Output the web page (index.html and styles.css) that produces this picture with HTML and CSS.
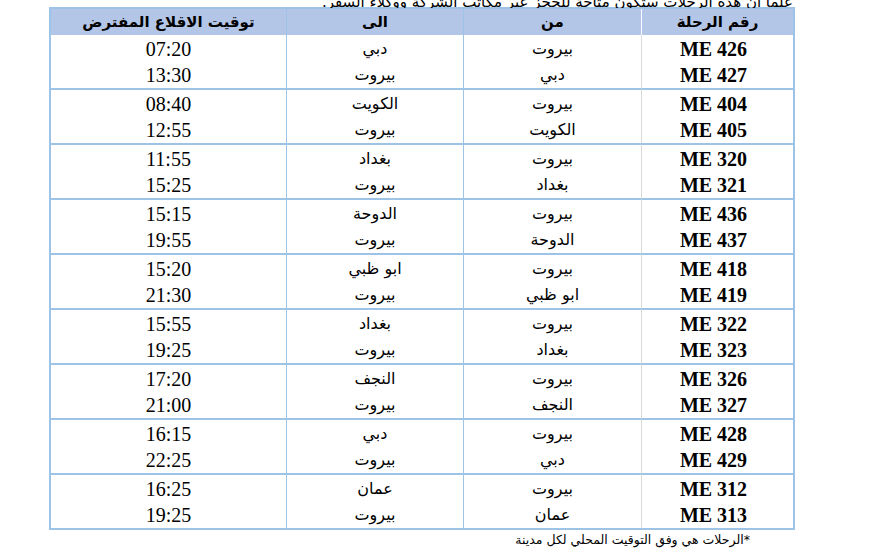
FILE: index.html
```html
<!DOCTYPE html>
<html lang="ar" dir="rtl">
<head>
<meta charset="utf-8">
<title>جدول الرحلات</title>
<link rel="stylesheet" href="styles.css">
</head>
<body>
<div class="page">
  <div class="clip"><p class="lead">علماً أن هذه الرحلات ستكون متاحة للحجز عبر مكاتب الشركة ووكلاء السفر.</p></div>
  <table class="flights">
    <colgroup>
      <col class="c-num"><col class="c-from"><col class="c-to"><col class="c-time">
    </colgroup>
    <thead>
      <tr>
        <th class="num">رقم الرحلة</th>
        <th>من</th>
        <th>الى</th>
        <th class="last">توقيت الاقلاع المفترض</th>
      </tr>
    </thead>
    <tbody>
      <tr><td class="num"><div>ME 426</div><div>ME 427</div></td><td class="ar"><div>بيروت</div><div>دبي</div></td><td class="ar"><div>دبي</div><div>بيروت</div></td><td class="time last"><div>07:20</div><div>13:30</div></td></tr>
      <tr><td class="num"><div>ME 404</div><div>ME 405</div></td><td class="ar"><div>بيروت</div><div>الكويت</div></td><td class="ar"><div>الكويت</div><div>بيروت</div></td><td class="time last"><div>08:40</div><div>12:55</div></td></tr>
      <tr><td class="num"><div>ME 320</div><div>ME 321</div></td><td class="ar"><div>بيروت</div><div>بغداد</div></td><td class="ar"><div>بغداد</div><div>بيروت</div></td><td class="time last"><div>11:55</div><div>15:25</div></td></tr>
      <tr><td class="num"><div>ME 436</div><div>ME 437</div></td><td class="ar"><div>بيروت</div><div>الدوحة</div></td><td class="ar"><div>الدوحة</div><div>بيروت</div></td><td class="time last"><div>15:15</div><div>19:55</div></td></tr>
      <tr><td class="num"><div>ME 418</div><div>ME 419</div></td><td class="ar"><div>بيروت</div><div>ابو ظبي</div></td><td class="ar"><div>ابو ظبي</div><div>بيروت</div></td><td class="time last"><div>15:20</div><div>21:30</div></td></tr>
      <tr><td class="num"><div>ME 322</div><div>ME 323</div></td><td class="ar"><div>بيروت</div><div>بغداد</div></td><td class="ar"><div>بغداد</div><div>بيروت</div></td><td class="time last"><div>15:55</div><div>19:25</div></td></tr>
      <tr><td class="num"><div>ME 326</div><div>ME 327</div></td><td class="ar"><div>بيروت</div><div>النجف</div></td><td class="ar"><div>النجف</div><div>بيروت</div></td><td class="time last"><div>17:20</div><div>21:00</div></td></tr>
      <tr><td class="num"><div>ME 428</div><div>ME 429</div></td><td class="ar"><div>بيروت</div><div>دبي</div></td><td class="ar"><div>دبي</div><div>بيروت</div></td><td class="time last"><div>16:15</div><div>22:25</div></td></tr>
      <tr><td class="num"><div>ME 312</div><div>ME 313</div></td><td class="ar"><div>بيروت</div><div>عمان</div></td><td class="ar"><div>عمان</div><div>بيروت</div></td><td class="time last"><div>16:25</div><div>19:25</div></td></tr>
    </tbody>
  </table>
  <p class="note">*الرحلات هي وفق التوقيت المحلي لكل مدينة</p>
</div>
</body>
</html>
```

FILE: styles.css
```css
html, body {
  margin: 0;
  padding: 0;
  background: #ffffff;
}

.page {
  width: 746px;
  margin: 0 auto 0 49px;
  color: #000;
}

.clip {
  height: 8px;
  overflow: hidden;
  display: flex;
  align-items: flex-end;
}

.lead {
  margin: 0 0 -2px 0;
  font-family: "DejaVu Sans", sans-serif;
  font-size: 15px;
  line-height: 16px;
  white-space: nowrap;
  padding-right: 2px;
}

.flights {
  width: 746px;
  table-layout: fixed;
  border-collapse: separate;
  border-spacing: 0;
  border: 2px solid #9dc3e6;
  margin-top: -1px;
}

.c-num { width: 152px; }
.c-from { width: 178px; }
.c-to { width: 177px; }
.c-time { width: 235px; }

.flights th,
.flights td {
  box-sizing: border-box;
  padding: 0;
  text-align: center;
  border-left: 1px solid #9dc3e6;
}

.flights th.last,
.flights td.last {
  border-left: none;
}

.flights th {
  height: 26px;
  background: #b4c6e7;
  font-family: "DejaVu Sans", sans-serif;
  font-weight: bold;
  font-size: 15px;
  line-height: 26px;
}

.flights th.num {
  border-left-color: #ffffff;
}

.flights td {
  height: 55px;
  border-top: 2px solid #9dc3e6;
  padding-top: 1px;
  vertical-align: top;
}

.flights tbody tr:first-child td {
  height: 53px;
  border-top: none;
}

.flights td.num {
  border-left-color: #d9d9d9;
  font-family: "Liberation Serif", "Times New Roman", serif;
  font-weight: bold;
  font-size: 20px;
  padding-right: 8px;
}

.flights td.num div {
  direction: ltr;
}

.flights td.ar {
  font-family: "DejaVu Sans", sans-serif;
  font-size: 16px;
}

.flights td.time {
  font-family: "Liberation Serif", "Times New Roman", serif;
  font-size: 20px;
}

.flights td div {
  height: 26px;
  line-height: 26px;
}

.note {
  margin: 2px 0 0 0;
  padding-right: 45px;
  font-family: "DejaVu Sans", sans-serif;
  font-size: 12.5px;
  line-height: 16px;
}
```
